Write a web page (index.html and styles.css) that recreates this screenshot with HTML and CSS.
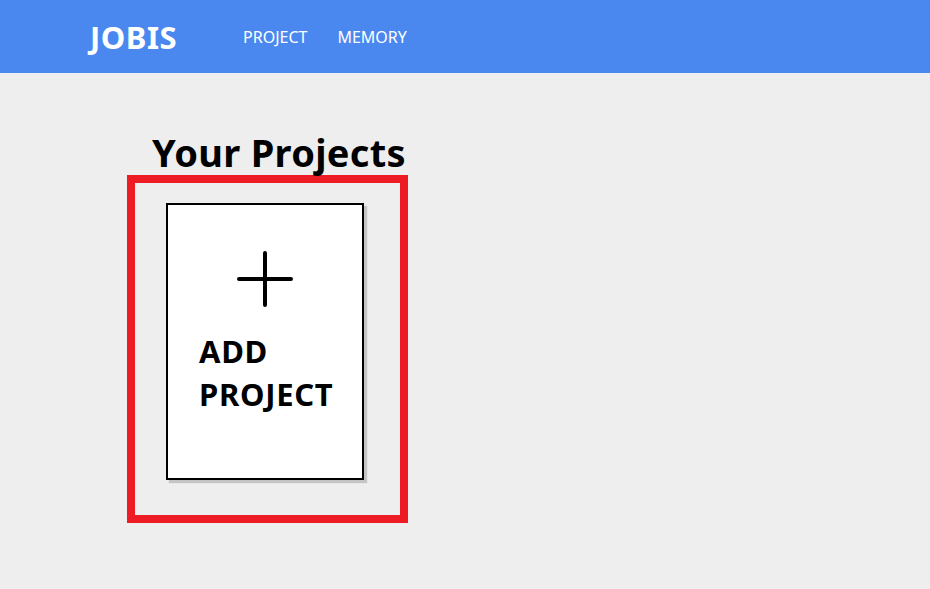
FILE: index.html
```html
<!DOCTYPE html>
<html lang="en">
<head>
<meta charset="utf-8">
<title>JOBIS</title>
<link rel="stylesheet" href="styles.css">
</head>
<body>
<header class="topbar">
  <div class="logo">JOBIS</div>
  <nav class="nav">
    <a class="nav-link" href="#">PROJECT</a>
    <a class="nav-link" href="#">MEMORY</a>
  </nav>
</header>
<main class="main">
  <h1 class="title">Your Projects</h1>
  <section class="project-box">
    <div class="add-card">
      <svg class="plus" width="56" height="56" viewBox="0 0 56 56" aria-hidden="true">
        <path d="M28 2 V54 M2 28 H54" stroke="#000" stroke-width="4" stroke-linecap="round" fill="none"/>
      </svg>
      <div class="add-text">ADD<br>PROJECT</div>
    </div>
  </section>
</main>
</body>
</html>
```

FILE: styles.css
```css
* { box-sizing: border-box; }
html, body { margin: 0; padding: 0; }
body {
  background: #eeeeee;
  font-family: "Noto Sans", "Open Sans", sans-serif;
  width: 930px;
  height: 589px;
  overflow: hidden;
}
.topbar {
  height: 73px;
  background: #4a88f0;
  display: flex;
  align-items: center;
  padding-left: 90px;
}
.logo {
  color: #fff;
  font-weight: 700;
  font-size: 31px;
  letter-spacing: 0.5px;
}
.nav {
  display: flex;
  gap: 30px;
  margin-left: 66px;
}
.nav-link {
  color: #fff;
  text-decoration: none;
  font-size: 16px;
}
.main {
  padding-left: 127px;
}
.title {
  margin: 56px 0 0 25px;
  font-size: 38px;
  line-height: 46px;
  font-weight: 700;
  color: #000;
  letter-spacing: 0.3px;
}
.project-box {
  width: 281px;
  height: 348px;
  border: 8px solid #ed1c24;
  padding: 20px 0 0 31px;
}
.add-card {
  width: 198px;
  height: 277px;
  background: #fff;
  border: 2px solid #000;
  box-shadow: 3px 3px 1px #c4c4c4;
  display: flex;
  flex-direction: column;
  padding-top: 46px;
}
.plus {
  display: block;
  margin-left: 69px;
}
.add-text {
  margin: 23px 0 0 31px;
  font-size: 31px;
  line-height: 43px;
  font-weight: 700;
  color: #000;
  letter-spacing: 0.7px;
}
```
